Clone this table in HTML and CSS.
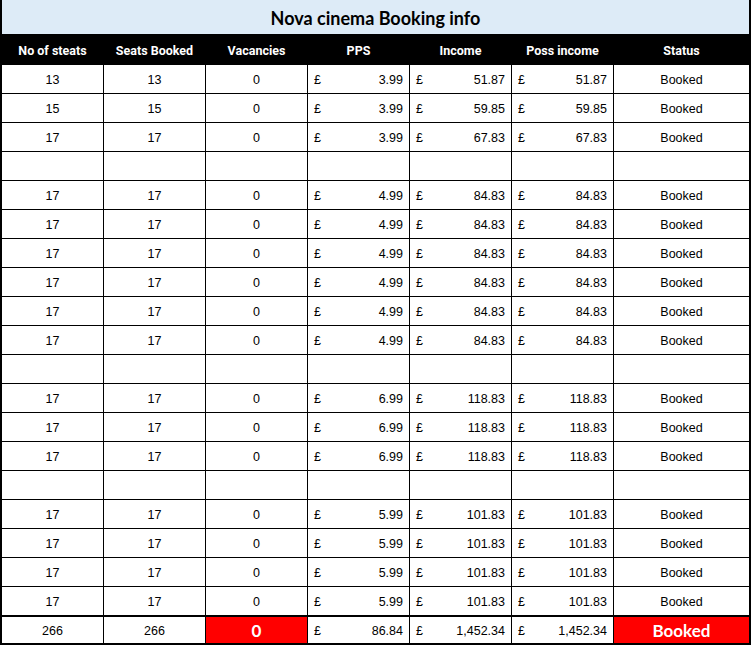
FILE: index.html
```html
<!DOCTYPE html>
<html>
<head>
<meta charset="utf-8">
<link rel="stylesheet" href="styles.css">
</head>
<body>
<div class="sheet" id="sheet">
  <div class="title">Nova cinema Booking info</div>
  <div class="hd">No of steats</div>
  <div class="hd">Seats Booked</div>
  <div class="hd">Vacancies</div>
  <div class="hd">PPS</div>
  <div class="hd">Income</div>
  <div class="hd">Poss income</div>
  <div class="hd">Status</div>
</div>
<script src="app.js"></script>
</body>
</html>
```
FILE: app.js
```js
const rows = [
  [13,13,0,"3.99","51.87","51.87"],
  [15,15,0,"3.99","59.85","59.85"],
  [17,17,0,"3.99","67.83","67.83"],
  null,
  [17,17,0,"4.99","84.83","84.83"],
  [17,17,0,"4.99","84.83","84.83"],
  [17,17,0,"4.99","84.83","84.83"],
  [17,17,0,"4.99","84.83","84.83"],
  [17,17,0,"4.99","84.83","84.83"],
  [17,17,0,"4.99","84.83","84.83"],
  null,
  [17,17,0,"6.99","118.83","118.83"],
  [17,17,0,"6.99","118.83","118.83"],
  [17,17,0,"6.99","118.83","118.83"],
  null,
  [17,17,0,"5.99","101.83","101.83"],
  [17,17,0,"5.99","101.83","101.83"],
  [17,17,0,"5.99","101.83","101.83"],
  [17,17,0,"5.99","101.83","101.83"]
];
const sheet = document.getElementById('sheet');
function cell(cls, html) {
  const d = document.createElement('div');
  d.className = cls;
  d.innerHTML = html;
  sheet.appendChild(d);
}
function money(v) {
  return '<span>£</span><span>' + v + '</span>';
}
rows.forEach(r => {
  if (!r) {
    for (let i = 0; i < 7; i++) cell('c', '');
    return;
  }
  cell('c', r[0]);
  cell('c', r[1]);
  cell('c', r[2]);
  cell('c m', money(r[3]));
  cell('c m', money(r[4]));
  cell('c m', money(r[5]));
  cell('c', 'Booked');
});
cell('c t', '266');
cell('c t', '266');
cell('c t red', '0');
cell('c t m', money('86.84'));
cell('c t m', money('1,452.34'));
cell('c t m', money('1,452.34'));
cell('c t red', 'Booked');
```
FILE: styles.css
```css
html, body {
  margin: 0;
  padding: 0;
  background: #fff;
}
body {
  width: 753px;
  height: 646px;
  overflow: hidden;
}
.sheet {
  width: 751px;
  box-sizing: border-box;
  display: grid;
  grid-template-columns: 101px 101px 101px 101px 101px 101px 135px;
  grid-template-rows: 34px 29px repeat(19, 28px) 27px;
  column-gap: 1px;
  row-gap: 1px;
  background: #000;
  padding: 0 2px 2px 2px;
  font-family: "Liberation Sans", Arial, sans-serif;
  font-size: 12.5px;
  color: #000;
}
.title {
  grid-column: 1 / -1;
  margin: 0 -2px;
  background: #ddebf7;
  border-left: 2px solid #000;
  border-right: 2px solid #000;
  display: flex;
  align-items: center;
  justify-content: center;
  font-family: Lato, "Open Sans", sans-serif;
  font-weight: 700;
  font-size: 18px;
  padding-top: 1px;
}
.hd {
  background: #000;
  color: #fff;
  display: flex;
  align-items: center;
  justify-content: center;
  font-family: Roboto, "Liberation Sans", sans-serif;
  font-weight: 700;
  font-size: 12.5px;
  padding-top: 1px;
}
.c {
  background: #fff;
  display: flex;
  align-items: center;
  justify-content: center;
  padding-top: 1px;
}
.m {
  justify-content: space-between;
  padding-left: 6px;
  padding-right: 6px;
}
.t {
  margin-top: 1px;
}
.red {
  background: #ff0000;
  color: #fff;
  font-family: Lato, "Open Sans", sans-serif;
  font-weight: 700;
  font-size: 17px;
}
```
